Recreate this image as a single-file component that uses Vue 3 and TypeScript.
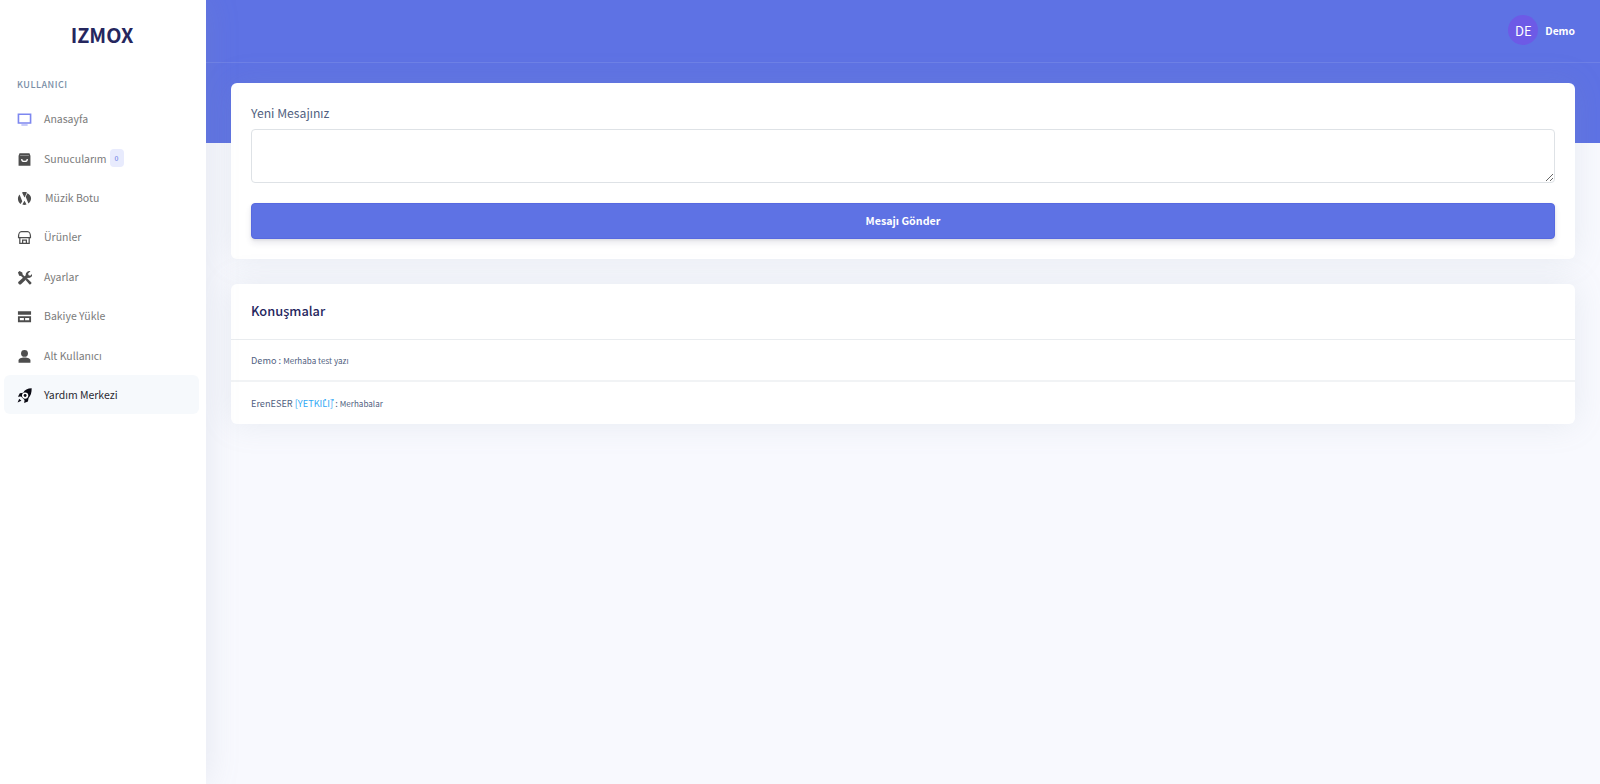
<template>
  <div class="shell">
    <aside class="sidebar">
      <div class="brand">IZMOX</div>
      <div class="section-title">KULLANICI</div>
      <nav class="nav">
        <a v-for="item in menu" :key="item.label" class="nav-item" :class="{ active: item.active }">
          <svg class="icon" viewBox="0 0 24 24" aria-hidden="true" v-html="item.icon" :style="{ color: item.color }"></svg>
          <span class="nav-label" :style="{ marginLeft: item.shift }">{{ item.label }}</span>
          <span v-if="item.badge !== undefined" class="badge">{{ item.badge }}</span>
        </a>
      </nav>
    </aside>

    <main class="main">
      <div class="hero">
        <header class="topbar">
          <div class="avatar">DE</div>
          <span class="username">Demo</span>
        </header>
      </div>

      <div class="content">
        <section class="card form-card">
          <label class="field-label" for="msg">Yeni Mesajınız</label>
          <textarea id="msg" class="textarea"></textarea>
          <button class="send" type="button">Mesajı Gönder</button>
        </section>

        <section class="card">
          <h3 class="card-title">Konuşmalar</h3>
          <div v-for="m in messages" :key="m.text" class="msg">
            <span>{{ m.author }}</span>
            <span v-if="m.staff" class="staff"> [YETKİLİ]</span>
            <span> : </span><small>{{ m.text }}</small>
          </div>
        </section>
      </div>
    </main>
  </div>
</template>

<script setup lang="ts">
type MenuItem = {
  label: string;
  icon: string;
  color?: string;
  badge?: number;
  active?: boolean;
  shift?: string;
};

const menu: MenuItem[] = [
  {
    label: 'Anasayfa',
    color: '#7d87f0',
    icon: '<path fill="none" stroke="currentColor" stroke-width="2.6" d="M2.300 3.500h19.400v14H2.300z"/><path fill="currentColor" opacity=".55" d="M7 19.500h10V22H7z"/>',
  },
  {
    label: 'Sunucularım',
    badge: 0,
    icon: '<path fill="currentColor" d="M4 2h16l1.500 4v16h-19V6z"/><path fill="#fff" opacity=".55" d="M5 5h14v1H5z"/><path fill="none" stroke="#fff" stroke-width="2" d="M7.500 11c0 5.500 9 5.500 9 0"/>',
  },
  {
    label: 'Müzik Botu',
    shift: '1px',
    icon: '<path fill="currentColor" d="M8 2.200c2.600-.8 5.400-.8 8 0l-4 8.300zM1.500 12.500c0-2.700 1-5 2.600-6.800l4.300 10.800-2.500 4.300c-2.800-2-4.400-4.900-4.400-8.300zM22.500 11.500c0 3.400-1.600 6.400-4.300 8.500L13.900 9.200 16.700 3.600c3.500 2 5.800 4.500 5.800 7.900zM12 15.500l3.200 6.200c-2.300.7-4.400.7-6.600 0z"/>',
  },
  {
    label: 'Ürünler',
    icon: '<path fill="none" stroke="currentColor" stroke-width="2" d="M7 2.500h10c2.500 0 4.500 3.500 4.500 7.500v2h-19v-2c0-4 2-7.500 4.500-7.500zM4.500 12v9.500h15V12M9 21.500V16h6v5.500"/>',
  },
  {
    label: 'Ayarlar',
    icon: '<path fill="currentColor" d="M1.500 4L4 1.500l4.500 2.500.5 3 4 4-2.500 2.500-4-4-3-.5zM14 8.300C13.500 4.500 17 .7 21.500 1.800l-3.700 3.700.7 2.800 2.800.7 3-3c.7 4.500-3 7.500-7 6.500L6 23c-1.700 1-5-1.500-4-4z"/><path fill="currentColor" d="M13.500 15.500l2.500-2.500 7 7c.7 1.800-1.500 3.800-3 3z"/>',
  },
  {
    label: 'Bakiye Yükle',
    icon: '<path fill="currentColor" d="M1.500 3.500h21V9h-21zM1.500 11.500h21V21h-21z"/><path fill="#fff" d="M4.500 14.500h6.500v3.500H4.500zM13 14.500h6.500v3.500H13z"/>',
  },
  {
    label: 'Alt Kullanıcı',
    icon: '<circle fill="currentColor" cx="12" cy="7" r="5.500"/><path fill="currentColor" d="M2.500 22v-3.500c0-3.500 4-5 9.500-5s9.500 1.500 9.500 5V22z"/>',
  },
  {
    label: 'Yardım Merkezi',
    active: true,
    color: '#0b0b14',
    icon: '<path fill="currentColor" d="M23.500 .5c0 7-1.500 12-5 15.500l-1 5.500-6 2.500 .5-5-5.500-5.500-5 .5 3-5.500 5.500-1C12 3 17 .5 23.500 .5z"/><circle fill="#fff" cx="13" cy="12" r="5"/><circle fill="currentColor" cx="13" cy="12" r="2.300"/><path fill="currentColor" d="M3.500 17l3.500 3.500-6 2.500z"/>',
  },
];

const messages = [
  { author: 'Demo', text: 'Merhaba test yazı', staff: false },
  { author: 'ErenESER', text: 'Merhabalar', staff: true },
];
</script>

<style>
html,
body {
  margin: 0;
  background: #f8f9fe;
}
</style>

<style scoped>
.shell {
  display: flex;
  min-height: 784px;
  font-family: 'Noto Sans CJK SC', 'Noto Sans', sans-serif;
  color: #525f7f;
}

.sidebar {
  width: 206px;
  flex: none;
  background: #fff;
  box-shadow: 0 0 32px rgba(136, 152, 170, 0.18);
  position: relative;
  z-index: 2;
}
.brand {
  height: 69px;
  line-height: 69px;
  padding-right: 2px;
  text-align: center;
  font-size: 19.800px;
  font-weight: 700;
  color: #25265e;
}
.section-title {
  padding: 9px 0 0 17px;
  height: 21px;
  font-size: 9px;
  line-height: 14px;
  font-weight: 500;
  letter-spacing: 0.5px;
  color: #7a8ea6;
}
.nav {
  display: flex;
  flex-direction: column;
}
.nav-item {
  display: flex;
  align-items: center;
  height: 39.400px;
  margin: 0 7px 0 4px;
  padding-left: 13px;
  border-radius: 6px;
  font-size: 10.500px;
  color: #7b7b7b;
}
.nav-item.active {
  background: #f6f9fc;
  color: #2a2a33;
}
.icon {
  width: 15px;
  height: 15px;
  flex: none;
  margin-top: 2px;
  margin-right: 12px;
  color: #4d4d4d;
}
.badge {
  margin-left: 3px;
  width: 14px;
  height: 18px;
  border-radius: 4px;
  background: #e8ebfd;
  color: #5e72e4;
  font-size: 7px;
  display: flex;
  align-items: center;
  justify-content: center;
}

.main {
  flex: 1;
  min-width: 0;
  position: relative;
}
.hero {
  height: 143px;
  background: #5e72e4;
}
.topbar {
  height: 63px;
  display: flex;
  align-items: center;
  justify-content: flex-end;
  padding-right: 25px;
  padding-bottom: 2px;
  box-sizing: border-box;
  border-bottom: 1px solid rgba(255, 255, 255, 0.1);
}
.avatar {
  width: 30px;
  height: 30px;
  border-radius: 50%;
  background: #6d5ae6;
  color: #fff;
  font-size: 13px;
  display: flex;
  align-items: center;
  justify-content: center;
  margin-right: 7px;
}
.username {
  color: #fff;
  font-size: 10.300px;
  font-weight: 700;
}

.content {
  margin-top: -60px;
  padding: 0 25px;
  display: flex;
  flex-direction: column;
  gap: 25px;
  position: relative;
}
.card {
  background: #fff;
  border-radius: 6px;
  box-shadow: 0 0 32px rgba(136, 152, 170, 0.15);
}
.form-card {
  padding: 20px;
  display: flex;
  flex-direction: column;
}
.field-label {
  font-size: 12.200px;
  line-height: 20px;
  margin-bottom: 6px;
}
.textarea {
  height: 54px;
  box-sizing: border-box;
  border: 1px solid #dee2e6;
  border-radius: 4px;
  background: #fff;
  outline: none;
  margin: 0 0 20px;
  display: block;
}
.send {
  height: 36px;
  border: 1px solid #5769e0;
  border-radius: 4px;
  background: #5e72e4;
  color: #fff;
  font-family: inherit;
  font-size: 10.700px;
  font-weight: 700;
  padding-bottom: 3px;
  box-shadow: 0 4px 6px rgba(50, 50, 93, 0.11), 0 1px 3px rgba(0, 0, 0, 0.08);
}
.card-title {
  margin: 0;
  height: 56px;
  line-height: 54px;
  padding: 0 20px;
  box-sizing: border-box;
  font-size: 12.800px;
  font-weight: 500;
  color: #25265e;
  border-bottom: 1px solid #e9ecef;
}
.msg {
  height: 42px;
  line-height: 41px;
  padding: 0 20px;
  font-size: 9.200px;
  box-sizing: border-box;
  border-bottom: 2px solid #f1f3f5;
}
.msg:last-child {
  border-bottom: none;
  line-height: 43px;
}
.msg small {
  font-size: 8.100px;
}
.staff {
  color: #2fa8f5;
}
</style>
